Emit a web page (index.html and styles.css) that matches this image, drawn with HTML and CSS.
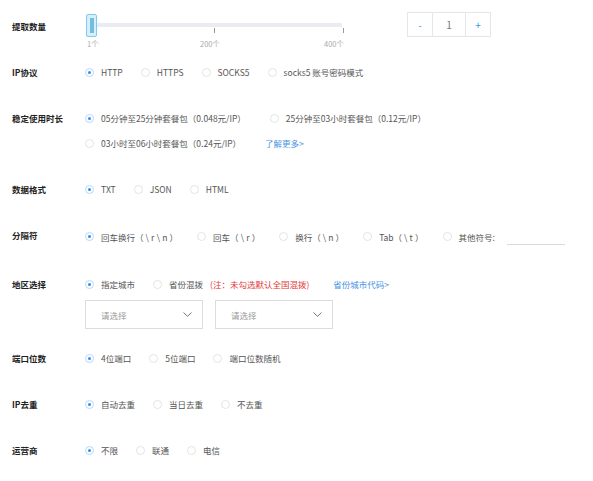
FILE: index.html
```html
<!DOCTYPE html>
<html lang="zh-CN">
<head>
    <meta charset="UTF-8">
    <meta name="viewport" content="width=device-width, initial-scale=1.0">
    <title>提取代理</title>
    <link rel="stylesheet" href="styles.css">
</head>
<body>
    <div class="form">
        <div class="row">
            <div class="label">提取数量</div>
            <div class="slider">
                <div class="track"></div>
                <span class="tick tick-mid"></span>
                <span class="tick tick-end"></span>
                <span class="mark mark-start">1个</span>
                <span class="mark mark-mid">200个</span>
                <span class="mark mark-end">400个</span>
                <div class="handle"><span class="grip"></span></div>
            </div>
            <div class="stepper">
                <span class="step-btn">-</span>
                <span class="step-val">1</span>
                <span class="step-btn">+</span>
            </div>
        </div>

        <div class="row">
            <div class="label">IP协议</div>
            <div class="options">
                <span class="opt"><i class="radio checked"></i>HTTP</span>
                <span class="opt"><i class="radio"></i>HTTPS</span>
                <span class="opt"><i class="radio"></i>SOCKS5</span>
                <span class="opt"><i class="radio"></i>socks5 账号密码模式</span>
            </div>
        </div>

        <div class="row">
            <div class="label">稳定使用时长</div>
            <div class="lines">
                <div class="options wide">
                    <span class="opt"><i class="radio checked"></i>05分钟至25分钟套餐包（0.048元/IP）</span>
                    <span class="opt"><i class="radio"></i>25分钟至03小时套餐包（0.12元/IP）</span>
                </div>
                <div class="options wide">
                    <span class="opt"><i class="radio"></i>03小时至06小时套餐包（0.24元/IP）</span>
                    <a class="link" href="#">了解更多&gt;</a>
                </div>
            </div>
        </div>

        <div class="row">
            <div class="label">数据格式</div>
            <div class="options">
                <span class="opt"><i class="radio checked"></i>TXT</span>
                <span class="opt"><i class="radio"></i>JSON</span>
                <span class="opt"><i class="radio"></i>HTML</span>
            </div>
        </div>

        <div class="row">
            <div class="label">分隔符</div>
            <div class="options sep">
                <span class="opt"><i class="radio checked"></i>回车换行（<span class="esc">\r\n</span>）</span>
                <span class="opt"><i class="radio"></i>回车（<span class="esc">\r</span>）</span>
                <span class="opt"><i class="radio"></i>换行（<span class="esc">\n</span>）</span>
                <span class="opt"><i class="radio"></i>Tab（<span class="esc">\t</span>）</span>
                <span class="opt"><i class="radio"></i>其他符号:</span>
                <span class="line-input"></span>
            </div>
        </div>

        <div class="row row-area">
            <div class="label">地区选择</div>
            <div class="lines">
                <div class="options">
                    <span class="opt"><i class="radio checked"></i>指定城市</span>
                    <span class="opt tight"><i class="radio"></i>省份混拨</span>
                    <span class="note">(注：未勾选默认全国混拨)</span>
                    <a class="link" href="#">省份城市代码&gt;</a>
                </div>
                <div class="selects">
                    <div class="select">请选择
                        <svg class="chevron" width="9" height="5" viewBox="0 0 9 5"><path d="M0.5 0.5 L4.5 4.3 L8.5 0.5" fill="none" stroke="#666" stroke-width="0.9"/></svg>
                    </div>
                    <div class="select">请选择
                        <svg class="chevron" width="9" height="5" viewBox="0 0 9 5"><path d="M0.5 0.5 L4.5 4.3 L8.5 0.5" fill="none" stroke="#666" stroke-width="0.9"/></svg>
                    </div>
                </div>
            </div>
        </div>

        <div class="row">
            <div class="label">端口位数</div>
            <div class="options">
                <span class="opt"><i class="radio checked"></i>4位端口</span>
                <span class="opt"><i class="radio"></i>5位端口</span>
                <span class="opt"><i class="radio"></i>端口位数随机</span>
            </div>
        </div>

        <div class="row">
            <div class="label">IP去重</div>
            <div class="options">
                <span class="opt"><i class="radio checked"></i>自动去重</span>
                <span class="opt"><i class="radio"></i>当日去重</span>
                <span class="opt"><i class="radio"></i>不去重</span>
            </div>
        </div>

        <div class="row">
            <div class="label">运营商</div>
            <div class="options">
                <span class="opt"><i class="radio checked"></i>不限</span>
                <span class="opt"><i class="radio"></i>联通</span>
                <span class="opt"><i class="radio"></i>电信</span>
            </div>
        </div>
    </div>
</body>
</html>
```

FILE: styles.css
```css
* {
    margin: 0;
    padding: 0;
    box-sizing: border-box;
}
body {
    background: #fff;
    font-family: "Noto Sans CJK SC", "Noto Sans", sans-serif;
    font-size: 8.5px;
    color: #555;
}
.form {
    padding: 19px 0 0 12px;
}
.row {
    display: flex;
    align-items: flex-start;
    line-height: 14px;
    margin-bottom: 32px;
}
.row-area {
    margin-bottom: 22px;
}
.label {
    width: 73px;
    flex-shrink: 0;
    font-weight: bold;
    color: #222;
}

/* slider */
.slider {
    position: relative;
    width: 258px;
    height: 14px;
    margin-left: 1px;
}
.track {
    position: absolute;
    left: 11px;
    right: 2px;
    top: 4px;
    height: 4px;
    background: #ebebf3;
}
.tick {
    position: absolute;
    top: 9px;
    width: 1px;
    height: 5px;
    background: #999;
}
.tick-mid { left: 128px; }
.tick-end { left: 257px; }
.mark {
    position: absolute;
    top: 18px;
    font-size: 7.5px;
    color: #aaa;
    white-space: nowrap;
}
.mark-start { left: 1px; }
.mark-mid { left: 114px; }
.mark-end { left: 238px; }
.handle {
    position: absolute;
    left: 0;
    top: -5px;
    width: 11px;
    height: 23px;
    border: 1px solid #7fcbe9;
    border-radius: 2px;
    background: #d6effa;
    display: flex;
    justify-content: center;
    padding-top: 3px;
}
.grip {
    width: 4px;
    height: 15px;
    background: #72bde0;
}

/* stepper */
.stepper {
    display: flex;
    height: 25px;
    margin: -7px 0 -4px 63px;
    border: 1px solid #e6e6e6;
}
.step-btn, .step-val {
    display: flex;
    align-items: center;
    justify-content: center;
    font-size: 10px;
}
.step-btn {
    width: 24px;
    color: #2b9be6;
}
.step-val {
    width: 34px;
    color: #777;
    border-left: 1px solid #e6e6e6;
    border-right: 1px solid #e6e6e6;
}

/* radio options */
.lines {
    display: flex;
    flex-direction: column;
    gap: 11px;
}
.options {
    display: flex;
    align-items: center;
    white-space: nowrap;
}
.opt {
    display: flex;
    align-items: center;
    margin-right: 18px;
}
.sep .opt {
    margin-right: 19px;
}
.wide .opt {
    margin-right: 24px;
}
.opt.tight {
    margin-right: 7px;
}
.radio {
    width: 9px;
    height: 9px;
    border: 1px solid #e4e4e4;
    border-radius: 50%;
    margin-right: 7px;
    position: relative;
}
.radio.checked {
    border-color: #b5daf5;
}
.radio.checked::after {
    content: "";
    position: absolute;
    left: 2px;
    top: 2px;
    width: 3px;
    height: 3px;
    border-radius: 50%;
    background: #2c8ff0;
}
.esc {
    letter-spacing: 2.2px;
    padding-left: 2px;
}
.line-input {
    width: 58px;
    height: 14px;
    margin-left: -7px;
    border-bottom: 1px solid #d9d9d9;
    margin-top: 3px;
}
.link {
    color: #4a94e4;
    text-decoration: none;
}
.note {
    color: #e23a3a;
    margin-right: 24px;
}

/* selects */
.selects {
    display: flex;
    gap: 12px;
    margin-top: -2px;
}
.select {
    width: 118px;
    height: 29px;
    border: 1px solid #dcdcdc;
    display: flex;
    align-items: center;
    justify-content: space-between;
    padding: 0 10px 0 15px;
    color: #999;
}
.chevron {
    display: block;
}
```
